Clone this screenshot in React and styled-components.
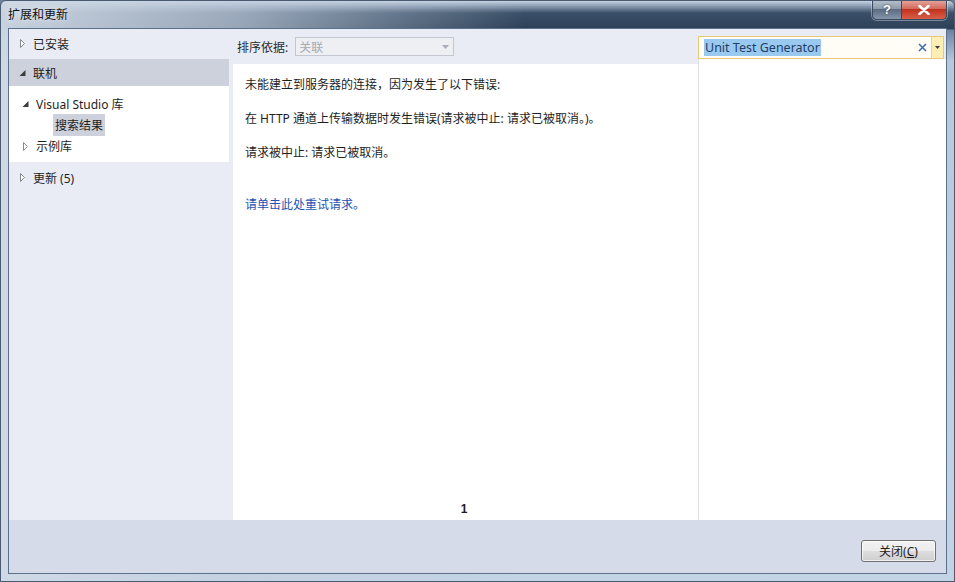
import React from "react";
import styled, { createGlobalStyle } from "styled-components";

const GlobalStyle = createGlobalStyle`
  html, body {
    margin: 0;
    padding: 0;
    background: #6f8198;
  }
  * {
    box-sizing: border-box;
  }
`;

function Arrow({ open }) {
  if (open) {
    return (
      <ArrowBox>
        <svg width="8" height="8" viewBox="0 0 8 8">
          <polygon points="6.5,1 6.5,7 0.5,7" fill="#3c3c3c" />
        </svg>
      </ArrowBox>
    );
  }
  return (
    <ArrowBox>
      <svg width="8" height="9" viewBox="0 0 8 9">
        <polygon points="1.5,0.5 5.5,4.5 1.5,8.5" fill="#fff" stroke="#8a8a8a" />
      </svg>
    </ArrowBox>
  );
}

export default function App() {
  return (
    <>
      <GlobalStyle />
      <Window>
        <TitleBar>
          <Title>扩展和更新</Title>
          <CaptionButtons>
            <HelpButton>?</HelpButton>
            <CloseButton>
              <svg width="12" height="10" viewBox="0 0 12 10">
                <path d="M1.5 1 L10.5 9 M10.5 1 L1.5 9" stroke="#fff" strokeWidth="2.6" strokeLinecap="round" />
              </svg>
            </CloseButton>
          </CaptionButtons>
        </TitleBar>

        <Client>
          <Main>
            <LeftPanel>
              <Category>
                <Arrow />
                <span>已安装</span>
              </Category>
              <Category selected>
                <Arrow open />
                <span>联机</span>
              </Category>
              <Tree>
                <TreeItem>
                  <Arrow open />
                  <span>Visual Studio 库</span>
                </TreeItem>
                <TreeItem indent>
                  <Selected>搜索结果</Selected>
                </TreeItem>
                <TreeItem>
                  <Arrow />
                  <span>示例库</span>
                </TreeItem>
              </Tree>
              <Category spaced>
                <Arrow />
                <span>更新 (5)</span>
              </Category>
            </LeftPanel>

            <Center>
              <Toolbar>
                <ToolLabel>排序依据:</ToolLabel>
                <SortSelect>
                  <span>关联</span>
                  <svg width="7" height="4" viewBox="0 0 7 4">
                    <polygon points="0,0 7,0 3.5,4" fill="#a8adb6" />
                  </svg>
                </SortSelect>
              </Toolbar>
              <Content>
                <Message>未能建立到服务器的连接，因为发生了以下错误:</Message>
                <Message>在 HTTP 通道上传输数据时发生错误(请求被中止: 请求已被取消。)。</Message>
                <Message>请求被中止: 请求已被取消。</Message>
                <RetryLink>请单击此处重试请求。</RetryLink>
                <Pager>1</Pager>
              </Content>
            </Center>

            <Right>
              <SearchBox>
                <SearchText>Unit Test Generator</SearchText>
                <ClearIcon>
                  <svg width="9" height="9" viewBox="0 0 9 9">
                    <path d="M1 1 L8 8 M8 1 L1 8" stroke="#3d70b3" strokeWidth="1.6" />
                  </svg>
                </ClearIcon>
                <SearchDrop>
                  <svg width="5" height="3" viewBox="0 0 5 3">
                    <polygon points="0,0 5,0 2.5,3" fill="#3b3b3b" />
                  </svg>
                </SearchDrop>
              </SearchBox>
              <Details />
            </Right>
          </Main>

          <Footer>
            <DialogButton>
              关闭(<u>C</u>)
            </DialogButton>
          </Footer>
        </Client>
      </Window>
    </>
  );
}

const Window = styled.div`
  width: 955px;
  height: 582px;
  display: flex;
  flex-direction: column;
  border: 1px solid #4a5a70;
  border-radius: 6px 6px 0 0;
  background:
    linear-gradient(to right, rgba(208, 218, 230, 0.95) 0, rgba(196, 208, 224, 0.7) 25%, rgba(190, 205, 222, 0) 55%),
    linear-gradient(to bottom, #c6d3e3 0, #8c9db3 5px, #3b5068 12px, #2c4058 28px, #6b84a2 29px, #b6c8dd 60px, #c3d4e7 100%);
  font-family: "Noto Sans", "Noto Sans CJK SC", sans-serif;
  font-size: 12px;
  color: #1e1e1e;
  overflow: hidden;
`;

const TitleBar = styled.div`
  height: 27px;
  display: flex;
  align-items: flex-start;
  padding-left: 7px;
  flex-shrink: 0;
`;

const Title = styled.div`
  margin-top: 4px;
  font-size: 12px;
  color: #101010;
  text-shadow: 0 0 6px rgba(255, 255, 255, 0.9);
`;

const CaptionButtons = styled.div`
  margin-left: auto;
  margin-right: 7px;
  margin-top: -1px;
  display: flex;
  border: 1px solid #3a4a5e;
  border-top: none;
  border-radius: 0 0 5px 5px;
  overflow: hidden;
  box-shadow: 0 0 0 1px rgba(255, 255, 255, 0.35);
`;

const HelpButton = styled.div`
  width: 29px;
  height: 19px;
  display: flex;
  align-items: center;
  justify-content: center;
  font-family: "Liberation Sans", sans-serif;
  font-weight: bold;
  font-size: 13px;
  color: #fff;
  text-shadow: 0 0 2px #333;
  border-right: 1px solid #3a4a5e;
  background: linear-gradient(to bottom, #b9c3cf 0, #8e9bac 45%, #5c6c82 50%, #8597ad 100%);
`;

const CloseButton = styled.div`
  width: 44px;
  height: 19px;
  display: flex;
  align-items: center;
  justify-content: center;
  background: linear-gradient(to bottom, #e6a8a0 0, #d36a5c 45%, #c1321f 50%, #d8604a 100%);
`;

const Client = styled.div`
  flex: 1;
  margin: 0 7px 7px 7px;
  display: flex;
  flex-direction: column;
  border: 1px solid #5d7089;
  background: #e9ecf5;
  min-height: 0;
`;

const Main = styled.div`
  flex: 1;
  display: flex;
  min-height: 0;
`;

const LeftPanel = styled.div`
  width: 220px;
  margin-right: 4px;
  padding-top: 1px;
  display: flex;
  flex-direction: column;
`;

const Category = styled.div`
  height: 27px;
  display: flex;
  align-items: center;
  padding-left: 9px;
  margin-top: ${(p) => (p.spaced ? "2px" : "0")};
  margin-bottom: ${(p) => (p.selected ? "0" : "2px")};
  background: ${(p) => (p.selected ? "#cdd1dc" : "transparent")};
  font-size: 12px;
`;

const ArrowBox = styled.span`
  width: 15px;
  display: inline-flex;
  align-items: center;
  justify-content: flex-start;
  padding-left: 1px;
`;

const Tree = styled.div`
  background: #fff;
  padding: 8px 0 6px 12px;
  display: flex;
  flex-direction: column;
  gap: 1px;
`;

const TreeItem = styled.div`
  height: 20px;
  display: flex;
  align-items: center;
  padding-left: ${(p) => (p.indent ? "32px" : "0")};
`;

const Selected = styled.span`
  background: #cdd1dc;
  padding: 2px 2px;
`;

const Center = styled.div`
  width: 465px;
  display: flex;
  flex-direction: column;
`;

const Toolbar = styled.div`
  height: 35px;
  display: flex;
  align-items: center;
  padding-left: 4px;
  flex-shrink: 0;
`;

const ToolLabel = styled.span`
  color: #2a2a2a;
  margin-right: 7px;
`;

const SortSelect = styled.div`
  width: 159px;
  height: 19px;
  border: 1px solid #c3c7cf;
  background: #edeff3;
  color: #a6abb4;
  display: flex;
  align-items: center;
  justify-content: space-between;
  padding: 0 4px 0 3px;
`;

const Content = styled.div`
  flex: 1;
  background: #fff;
  padding: 13px 12px 1px 12px;
  display: flex;
  flex-direction: column;
`;

const Message = styled.p`
  margin: 0 0 18px 0;
  line-height: 16px;
  color: #1e1e1e;
`;

const RetryLink = styled.a`
  margin-top: 18px;
  line-height: 16px;
  color: #2152b3;
  cursor: pointer;
`;

const Pager = styled.div`
  margin-top: auto;
  text-align: center;
  font-weight: bold;
  font-family: "Liberation Sans", sans-serif;
  font-size: 12px;
  line-height: 20px;
  padding-right: 3px;
`;

const Right = styled.div`
  flex: 1;
  display: flex;
  flex-direction: column;
  padding-top: 7px;
`;

const SearchBox = styled.div`
  height: 23px;
  margin-right: 2px;
  display: flex;
  align-items: center;
  border: 1px solid #e5c87a;
  background: #fffdf5;
  padding-left: 5px;
`;

const SearchText = styled.span`
  background: #99c9ef;
  color: #1f3d66;
  font-size: 12.5px;
  line-height: 17px;
  padding: 0 1px;
`;

const ClearIcon = styled.span`
  margin-left: auto;
  margin-right: 4px;
  display: inline-flex;
`;

const SearchDrop = styled.span`
  width: 12px;
  height: 100%;
  display: inline-flex;
  align-items: center;
  justify-content: center;
  border-left: 1px solid #ecd38f;
  background: #fdeeb3;
`;

const Details = styled.div`
  flex: 1;
  background: #fff;
  border-left: 1px solid #dcdfe6;
`;

const Footer = styled.div`
  height: 53px;
  background: #d6dbe9;
  display: flex;
  align-items: flex-end;
  justify-content: flex-end;
  padding: 0 10px 11px 0;
  flex-shrink: 0;
`;

const DialogButton = styled.button`
  width: 75px;
  height: 22px;
  font-family: "Noto Sans", "Noto Sans CJK SC", sans-serif;
  font-size: 12px;
  color: #1e1e1e;
  border: 1px solid #707070;
  border-radius: 3px;
  background: linear-gradient(to bottom, #f2f2f2 0, #ebebeb 50%, #dddddd 51%, #cfcfcf 100%);
  box-shadow: inset 0 0 0 1px rgba(255, 255, 255, 0.7);
  padding: 0;
  u {
    text-decoration: underline;
  }
`;
